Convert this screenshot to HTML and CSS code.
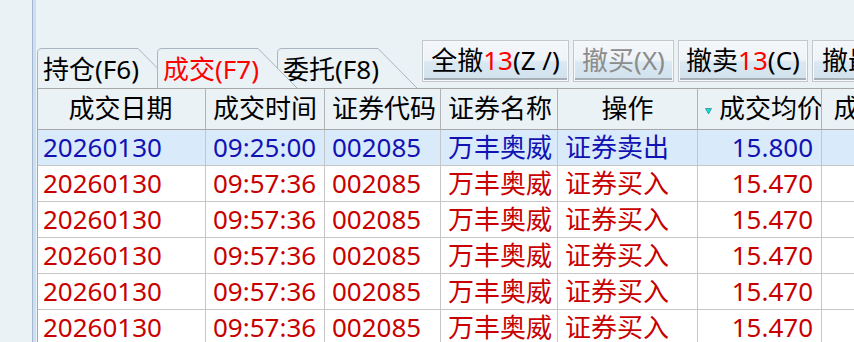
FILE: index.html
```html
<!DOCTYPE html>
<html lang="zh-CN">
<head>
  <meta charset="UTF-8" />
  <title>成交查询</title>
  <link rel="stylesheet" href="styles.css">
</head>
<body>
  <div class="app">
    <div class="side"></div>
    <div class="divider"></div>

    <div class="main">
      <!-- Tabs + action buttons -->
      <div class="topbar">
        <div class="tabs">
          <div class="tab tab-1">
            <svg class="tab-shape" width="140" height="40" viewBox="0 0 140 40"><path d="M0.5 40 V5 Q0.5 0.5 5 0.5 H101 L140 40" /></svg>
            <span class="tab-label">持仓(F6)</span>
          </div>
          <div class="tab tab-2 active">
            <svg class="tab-shape" width="140" height="40" viewBox="0 0 140 40"><path d="M0.5 40 V5 Q0.5 0.5 5 0.5 H101 L140 40" /></svg>
            <span class="tab-label">成交(F7)</span>
          </div>
          <div class="tab tab-3">
            <svg class="tab-shape" width="140" height="40" viewBox="0 0 140 40"><path d="M0.5 40 V5 Q0.5 0.5 5 0.5 H101 L140 40" /></svg>
            <span class="tab-label">委托(F8)</span>
          </div>
        </div>

        <div class="buttons">
          <div class="btn btn-all"><div class="btn-face">全撤<span class="num">13</span>(Z /)</div></div>
          <div class="btn btn-buy disabled"><div class="btn-face">撤买(X)</div></div>
          <div class="btn btn-sell"><div class="btn-face">撤卖<span class="num">13</span>(C)</div></div>
          <div class="btn btn-last"><div class="btn-face">撤最后(V)</div></div>
        </div>
      </div>

      <!-- Deal list -->
      <div class="grid">
        <div class="row head">
          <div>成交日期</div>
          <div>成交时间</div>
          <div>证券代码</div>
          <div>证券名称</div>
          <div>操作</div>
          <div><svg class="sort" width="7" height="7" viewBox="0 0 7 7"><path d="M0.5 0.5 H6.5 L3.5 6 Z" /></svg>成交均价</div>
          <div>成交数量</div>
        </div>
        <div class="row sel">
          <div>20260130</div><div>09:25:00</div><div>002085</div><div>万丰奥威</div><div>证券卖出</div><div class="r">15.800</div><div class="r">1300</div>
        </div>
        <div class="row">
          <div>20260130</div><div>09:57:36</div><div>002085</div><div>万丰奥威</div><div>证券买入</div><div class="r">15.470</div><div class="r">100</div>
        </div>
        <div class="row">
          <div>20260130</div><div>09:57:36</div><div>002085</div><div>万丰奥威</div><div>证券买入</div><div class="r">15.470</div><div class="r">100</div>
        </div>
        <div class="row">
          <div>20260130</div><div>09:57:36</div><div>002085</div><div>万丰奥威</div><div>证券买入</div><div class="r">15.470</div><div class="r">100</div>
        </div>
        <div class="row">
          <div>20260130</div><div>09:57:36</div><div>002085</div><div>万丰奥威</div><div>证券买入</div><div class="r">15.470</div><div class="r">100</div>
        </div>
        <div class="row">
          <div>20260130</div><div>09:57:36</div><div>002085</div><div>万丰奥威</div><div>证券买入</div><div class="r">15.470</div><div class="r">100</div>
        </div>
      </div>
    </div>
  </div>
</body>
</html>
```

FILE: styles.css
```css
* {
  box-sizing: border-box;
}

body {
  margin: 0;
  background: #ebf2f6;
  font-family: "Noto Sans", "Noto Sans CJK SC", sans-serif;
  font-size: 26px;
  color: #000;
  overflow: hidden;
}

.app {
  display: flex;
  height: 342px;
}

.side {
  width: 32px;
  flex: none;
}

.divider {
  width: 4px;
  flex: none;
  border-left: 1px solid #a3b7cf;
  background: #cddff3;
}

.main {
  flex: 1;
  min-width: 0;
  margin-left: 1px;
  overflow: hidden;
}

/* top bar */
.topbar {
  display: flex;
  align-items: flex-start;
  height: 88px;
  padding-top: 40px;
}

.tabs {
  display: flex;
  margin-top: 8px;
  flex: none;
}

.tab {
  position: relative;
  width: 140px;
  height: 40px;
  margin-right: -20px;
  line-height: 40px;
  padding-left: 6px;
  white-space: nowrap;
}
.tab:last-child {
  margin-right: 0;
}
.tab-1 { z-index: 1; }
.tab-3 { z-index: 2; }
.tab-2 { z-index: 3; }

.tab-shape {
  position: absolute;
  left: 0;
  top: 0;
}
.tab-shape path {
  fill: #ebf2f6;
  stroke: #a9b5c1;
  stroke-width: 1;
}

.tab-label {
  position: relative;
  top: 1px;
}
.tab.active .tab-label {
  color: #ff0000;
}

.buttons {
  display: flex;
  gap: 4px;
  margin-left: 5px;
  flex: none;
}

.btn {
  height: 42px;
  border: 1px solid #c3c7cb;
  padding: 1px;
  background: #f7f9fb;
}
.btn-all  { width: 147px; }
.btn-buy  { width: 101px; }
.btn-sell { width: 130px; }
.btn-last { width: 140px; }

.btn-face {
  height: 100%;
  border-bottom: 2px solid #a6afb6;
  background: linear-gradient(to bottom, #f4f7fa 0%, #eef3f7 50%, #dae8f2 56%, #d2e3ee 100%);
  text-align: center;
  padding-top: 1px;
  line-height: 35px;
  white-space: nowrap;
}
.btn-last .btn-face {
  text-align: left;
  padding-left: 8px;
}
.btn .num {
  color: #ff0000;
}
.btn.disabled .btn-face {
  color: #8c8c8c;
}

/* grid */
.grid {
  display: grid;
  grid-template-columns: 168px 119px 116px 117px 140px 124px 128px;
  width: max-content;
  border-top: 1px solid #a8a8a8;
  border-left: 1px solid #a8a8a8;
  background: #fff;
}

.row {
  display: contents;
}

.row > div {
  height: 36px;
  line-height: 35px;
  padding: 0 7px;
  border-right: 1px solid #c6c6c6;
  border-bottom: 1px solid #c6c6c6;
  white-space: nowrap;
  overflow: hidden;
  color: #c80000;
}
.row > div:first-child {
  padding-left: 5px;
}

.row.head > div {
  height: 41px;
  line-height: 39px;
  text-align: center;
  background: #ebf2f6;
  color: #000;
  border-right-color: #aeb4b8;
  border-bottom-color: #a8a8a8;
}

.row.sel > div {
  background: #d9ebfa;
  color: #1212b4;
}

.row > div.r {
  text-align: right;
  padding-right: 8px;
}

.sort {
  margin-right: 7px;
  vertical-align: 3px;
}
.sort path {
  fill: #00e5e5;
  stroke: #2a6a6a;
  stroke-width: 0.6;
}
```
